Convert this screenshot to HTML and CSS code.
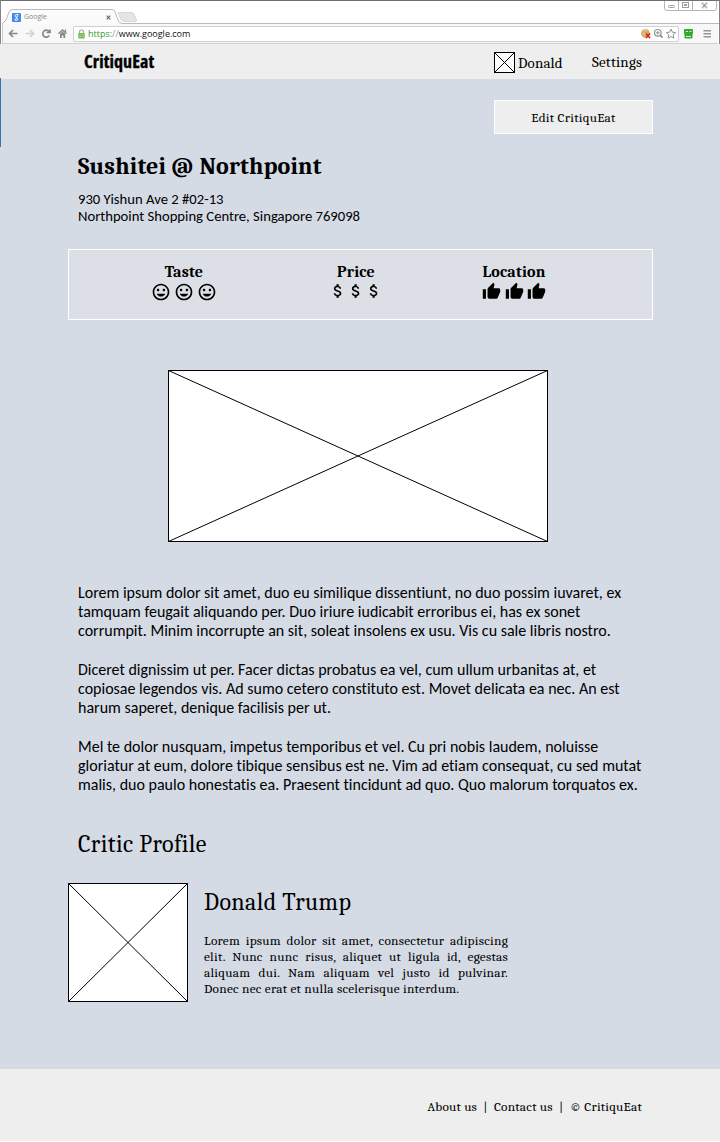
FILE: index.html
```html
<!DOCTYPE html>
<html lang="en">
<head>
<meta charset="utf-8">
<title>CritiquEat</title>
<link rel="stylesheet" href="styles.css">
</head>
<body>
<svg class="defs" width="0" height="0">
  <symbol id="smile" viewBox="0 0 24 24"><path d="M11.99 2C6.47 2 2 6.48 2 12s4.470 10 9.990 10C17.520 22 22 17.520 22 12S17.520 2 11.990 2zM12 20c-4.420 0-8-3.580-8-8s3.580-8 8-8 8 3.580 8 8-3.580 8-8 8zM15.500 11c.83 0 1.500-.67 1.500-1.500S16.330 8 15.500 8 14 8.670 14 9.500s.67 1.500 1.500 1.500zM8.500 11c.83 0 1.500-.67 1.500-1.500S9.330 8 8.500 8 7 8.670 7 9.500 7.670 11 8.500 11zM12 17.500c2.330 0 4.310-1.460 5.110-3.500H6.890c.8 2.040 2.780 3.500 5.110 3.500z"/></symbol>
  <symbol id="dollar" viewBox="0 0 24 24"><path d="M11.800 10.900c-2.270-.59-3-1.200-3-2.150 0-1.090 1.010-1.850 2.700-1.850 1.780 0 2.440.85 2.500 2.100h2.210c-.07-1.720-1.120-3.300-3.210-3.810V3h-3v2.160c-1.940.42-3.500 1.680-3.500 3.610 0 2.310 1.910 3.460 4.700 4.130 2.500.6 3 1.480 3 2.410 0 .69-.49 1.790-2.700 1.790-2.060 0-2.870-.92-2.980-2.100h-2.200c.12 2.190 1.760 3.420 3.680 3.830V21h3v-2.150c1.950-.37 3.500-1.500 3.500-3.550 0-2.840-2.430-3.810-4.700-4.400z"/></symbol>
  <symbol id="thumb" viewBox="0 0 24 24"><path d="M1 21h4V9H1v12zm22-11c0-1.100-.9-2-2-2h-6.310l.95-4.570.03-.32c0-.41-.17-.79-.44-1.060L14.170 1 7.590 7.590C7.220 7.950 7 8.450 7 9v10c0 1.100.9 2 2 2h9c.83 0 1.540-.5 1.840-1.220l3.020-7.050c.09-.23.14-.47.14-.73V10z"/></symbol>
</svg>

<div class="browser">
  <div class="tabstrip">
    <svg class="tab-shape" width="720" height="24" viewBox="0 0 720 24">
      <path d="M2.500 24V23.500L6 20L9 12Q10 9.500 12 9.500H112Q114 9.500 115 12L118 20Q119 23.500 122 23.500H719" fill="#fbfbfb" stroke="#b9b9b9"/>
      <path d="M119 12.500H131Q133 12.500 134 14L136.500 20Q137 21.500 135 21.500H124Q122 21.500 121 19.500L118.500 14Q118 12.500 119 12.500Z" fill="#e5e5e5" stroke="#d6d6d6"/>
      <path d="M664.500 1V8Q664.500 10.500 667 10.500H714Q716.500 10.500 716.500 8V1M678.500 1V10M692.500 1V10" fill="#fff" stroke="#b5b5b5"/>
      <g fill="none" stroke="#9c9c9c"><rect x="668.500" y="5.500" width="6" height="2" rx="1"/><rect x="682.500" y="2.500" width="6" height="5"/><rect x="684.500" y="4.500" width="2" height="1"/><path d="M702 3L707 8M707 3L702 8" stroke-width="2" stroke-dasharray="1.500 .6"/></g>
    </svg>
    <div class="tab">
      <svg width="9" height="9" viewBox="0 0 9 9"><rect width="9" height="9" rx="1" fill="#4387f3"/><path d="M6.500 1.500H4.500Q3 1.500 3 2.700T4.500 4T5.700 2.700T4.500 1.500M4.500 4Q4 5 5 5.300Q6.500 6 5.500 7Q4 8 3 7Q2.500 5.800 5 5.500" fill="none" stroke="#fff" stroke-width=".9"/></svg>
      <span class="tab-title">Google</span>
      <svg class="close" width="5" height="5" viewBox="0 0 5 5"><path d="M.7 .7L4.300 4.300M4.300 .7L.7 4.300" stroke="#666" stroke-width="1.200"/></svg>
    </div>
  </div>
  <div class="toolbar">
    <svg class="nav" width="62" height="16" viewBox="7 26 62 16" fill="none" stroke="#888" stroke-width="1.700">
      <path d="M17.500 33.500H10M13 30L9.500 33.500L13 37"/>
      <path d="M25.500 33.500H33M30 30L33.500 33.500L30 37" stroke="#d2d2d2"/>
      <path d="M49 31.500A3.500 3.500 0 1 0 49.300 35.500M50 29.500V32.500H46.500"/>
      <path d="M58.500 33.800L62.500 30L66.500 33.800" stroke-width="1.500"/><path d="M60 34L62.500 31.500L65.200 34V38H63.400V35.500H61.800V38H60Z" fill="#888" stroke="none"/><path d="M65.500 29.500V32" stroke-width="1.200"/>
    </svg>
    <div class="address">
      <svg width="7" height="10" viewBox="0 0 7 10"><path d="M1.500 5V3Q1.500 1 3.500 1T5.500 3V5" fill="none" stroke="#aaa" stroke-width="1.200"/><rect x=".3" y="4" width="6.400" height="5.500" rx=".7" fill="#73b94d"/><path d="M1 5.800H6M1 7.500H6" stroke="#a9d88e" stroke-width=".7"/></svg>
      <span class="url"><span class="scheme">https:</span><span class="slashes">//</span>www.google.com</span>
      <svg class="actions" width="37" height="12" viewBox="640 28 37 12">
        <circle cx="645.500" cy="33.300" r="4.400" fill="#d5aa65"/><path d="M643 31Q645 29 647 31M642.500 34Q644 33 645.500 34" stroke="#f1d9a5" fill="none"/><path d="M646 33.500L650 38M650 33.500L646 38" stroke="#d42222" stroke-width="1.600"/>
        <g fill="none" stroke="#929292"><circle cx="657.800" cy="32.800" r="3.300" stroke-width="1.200"/><path d="M660.300 35.300L662.500 37.700" stroke-width="1.800"/><path d="M656 32.800H659.600M657.800 31V34.600"/><path d="M671 29L672.400 32.200L675.700 32.500L673.200 34.800L673.900 38.200L671 36.500L668.100 38.200L668.800 34.800L666.300 32.500L669.600 32.200Z"/></g>
      </svg>
    </div>
    <svg class="extras" width="30" height="12" viewBox="683 28 30 12"><rect x="684" y="29" width="9" height="5.500" rx="1" fill="#36a832"/><rect x="684.500" y="34" width="8" height="4.500" rx="1" fill="#36a832"/><path d="M686 31.500H688M689.500 31.500H691.500M686 36.500H691" stroke="#d2f0c9"/><path d="M703.500 30.800H711M703.500 33.800H711M703.500 36.800H711" stroke="#959595" stroke-width="1.600"/></svg>
  </div>
</div>

<header class="site-header">
  <span class="brand">CritiquEat</span>
  <svg class="avatar" width="21" height="21" viewBox="0 0 21 21"><rect x=".5" y=".5" width="20" height="20" fill="#fff" stroke="#000"/><path d="M1 1L20 20M20 1L1 20" stroke="#000"/></svg>
  <span class="user">Donald</span>
  <span class="settings">Settings</span>
</header>

<main>
  <span class="edge"></span>
  <button class="edit">Edit CritiquEat</button>
  <h1>Sushitei @ Northpoint</h1>
  <address>930 Yishun Ave 2 #02-13<br>Northpoint Shopping Centre, Singapore 769098</address>

  <section class="ratings">
    <div class="rating taste"><b>Taste</b><div class="icons"><svg><use href="#smile"/></svg><svg><use href="#smile"/></svg><svg><use href="#smile"/></svg></div></div>
    <div class="rating price"><b>Price</b><div class="icons"><svg><use href="#dollar"/></svg><svg><use href="#dollar"/></svg><svg><use href="#dollar"/></svg></div></div>
    <div class="rating location"><b>Location</b><div class="icons"><svg><use href="#thumb"/></svg><svg><use href="#thumb"/></svg><svg><use href="#thumb"/></svg></div></div>
  </section>

  <svg class="photo" width="380" height="172" viewBox="0 0 380 172"><rect x=".5" y=".5" width="379" height="171" fill="#fff" stroke="#000"/><path d="M.5 .5L379.500 171.500M379.500 .5L.5 171.500" stroke="#000"/></svg>

  <article class="review">
    <p><span>Lorem ipsum dolor sit amet, duo eu similique dissentiunt, no duo possim iuvaret, ex</span><span>tamquam feugait aliquando per. Duo iriure iudicabit erroribus ei, has ex sonet</span><span>corrumpit. Minim incorrupte an sit, soleat insolens ex usu. Vis cu sale libris nostro.</span></p>
    <p><span>Diceret dignissim ut per. Facer dictas probatus ea vel, cum ullum urbanitas at, et</span><span>copiosae legendos vis. Ad sumo cetero constituto est. Movet delicata ea nec. An est</span><span>harum saperet, denique facilisis per ut.</span></p>
    <p><span>Mel te dolor nusquam, impetus temporibus et vel. Cu pri nobis laudem, noluisse</span><span>gloriatur at eum, dolore tibique sensibus est ne. Vim ad etiam consequat, cu sed mutat</span><span>malis, duo paulo honestatis ea. Praesent tincidunt ad quo. Quo malorum torquatos ex.</span></p>
  </article>

  <h2>Critic Profile</h2>
  <section class="critic">
    <svg width="120" height="119" viewBox="0 0 120 119"><rect x=".5" y=".5" width="119" height="118" fill="#fff" stroke="#000"/><path d="M.5 .5L119.500 118.500M119.500 .5L.5 118.500" stroke="#000"/></svg>
    <div class="bio">
      <h3>Donald Trump</h3>
      <p><span>Lorem ipsum dolor sit amet, consectetur adipiscing</span><span>elit. Nunc nunc risus, aliquet ut ligula id, egestas</span><span>aliquam dui. Nam aliquam vel justo id pulvinar.</span><span class="last">Donec nec erat et nulla scelerisque interdum.</span></p>
    </div>
  </section>
</main>
<footer>About us&nbsp; |&nbsp; Contact us&nbsp; |&nbsp; © CritiquEat</footer>
</body>
</html>
```
FILE: styles.css
```css
* { box-sizing: border-box; }
body { margin: 0; width: 720px; height: 1142px; overflow: hidden; color: #000; background: #fff; font-family: Cambria, Caladea, "Liberation Serif", serif; font-variant-ligatures: none; }
svg { display: block; flex: none; }
.defs { position: absolute; }

.browser { height: 44px; border-top: 1px solid #707070; border-left: 1px solid #858585; border-right: 1px solid #858585; background: #fff; font-family: "Open Sans", sans-serif; }
.tabstrip { position: relative; height: 23px; }
.tab-shape { position: absolute; left: -1px; top: -1px; }
.tab { position: relative; display: flex; align-items: center; width: 118px; height: 23px; padding: 9px 8px 0 11px; }
.tab-title { margin-left: 3px; font-size: 7px; line-height: 10px; color: #8b8675; }
.close { margin-left: auto; }
.toolbar { display: flex; align-items: center; height: 20px; margin: 0 1px; padding: 0 5px; background: #f8f8f8; border-left: 1px solid #ccc; border-bottom: 1px solid #d0d0d0; }
.nav { margin-left: -1px; }
.address { display: flex; align-items: center; width: 606px; height: 16px; margin-left: 4px; padding: 0 1px 0 4px; border: 1px solid #d0d0d0; border-radius: 2px; background: #fff; }
.url { margin-left: 3px; font-size: 9px; line-height: 14px; color: #111; }
.scheme { color: #2c9c2c; }
.slashes { color: #999; }
.actions { margin-left: auto; }
.extras { margin-left: 4px; }

.site-header { display: flex; align-items: center; height: 35px; padding-left: 84px; background: #eee; }
.brand { width: 410px; font: 700 18px/24px "Open Sans", sans-serif; font-stretch: 75%; letter-spacing: .1px; -webkit-text-stroke: .35px #000; margin-top: -2px; }
.avatar { margin-top: 2px; }
.user { width: 77px; padding: 3px 0 0 3px; font-size: 15px; letter-spacing: .15px; }
.settings { font-size: 15px; padding-top: 1px; letter-spacing: .2px; }

main { position: relative; height: 990px; padding: 21px 67px 0 68px; background: #d5dbe5; }
.edge { position: absolute; left: 0; top: -1px; width: 1px; height: 69px; background: #3c72aa; }
.edit { display: block; width: 159px; height: 34px; margin-left: auto; padding: 0; border: 1px solid #fff; background: #eee; color: #000; font-family: inherit; font-size: 13.33px; letter-spacing: .25px; }
h1, h2, h3, p { margin: 0; }
h1 { margin: 18px 0 0 10px; font-size: 24px; line-height: 28px; letter-spacing: .2px; }
address { margin: 11px 0 0 10px; font: 14.67px/17px Calibri, Carlito, Lato, sans-serif; font-variant-ligatures: none; }
.ratings { display: flex; height: 71px; margin-top: 24px; border: 1px solid #fff; background: #dddfe6; }
.rating { display: flex; flex-direction: column; align-items: center; padding-top: 13px; font-size: 16px; line-height: 18px; letter-spacing: .2px; }
.taste { margin-left: 83px; width: 64px; }
.price { margin-left: 109px; width: 62px; }
.location { margin-left: 94px; width: 66px; }
.icons { display: flex; }
.icons svg { width: 20px; height: 20px; margin: 1px 1.300px; }
.price .icons svg { width: 18px; height: 20px; margin: 0; }
.location .icons svg { width: 19px; height: 19px; margin: 1px 1.800px; }
.photo { margin: 50px 0 0 100px; }
.review { margin: 41px 0 0 10px; font: 16px/19px Calibri, Carlito, Lato, sans-serif; font-variant-ligatures: none; }
.review p { margin-bottom: 20px; }
.review span { display: block; white-space: nowrap; }
h2, h3 { font-size: 24px; line-height: 30px; font-weight: 400; letter-spacing: .4px; }
h2 { margin: 35px 0 0 10px; }
.critic { display: flex; margin-top: 24px; }
.bio { margin-left: 16px; width: 304px; padding-top: 4px; }
.bio p { margin-top: 16px; font-size: 13.33px; line-height: 16px; letter-spacing: .24px; }
.bio span { display: block; text-align-last: justify; white-space: nowrap; }
.bio .last { text-align-last: left; }
footer { height: 72px; padding: 30px 78px 0 0; background: #eee; text-align: right; font-size: 13.33px; line-height: 16px; letter-spacing: .2px; }
```
